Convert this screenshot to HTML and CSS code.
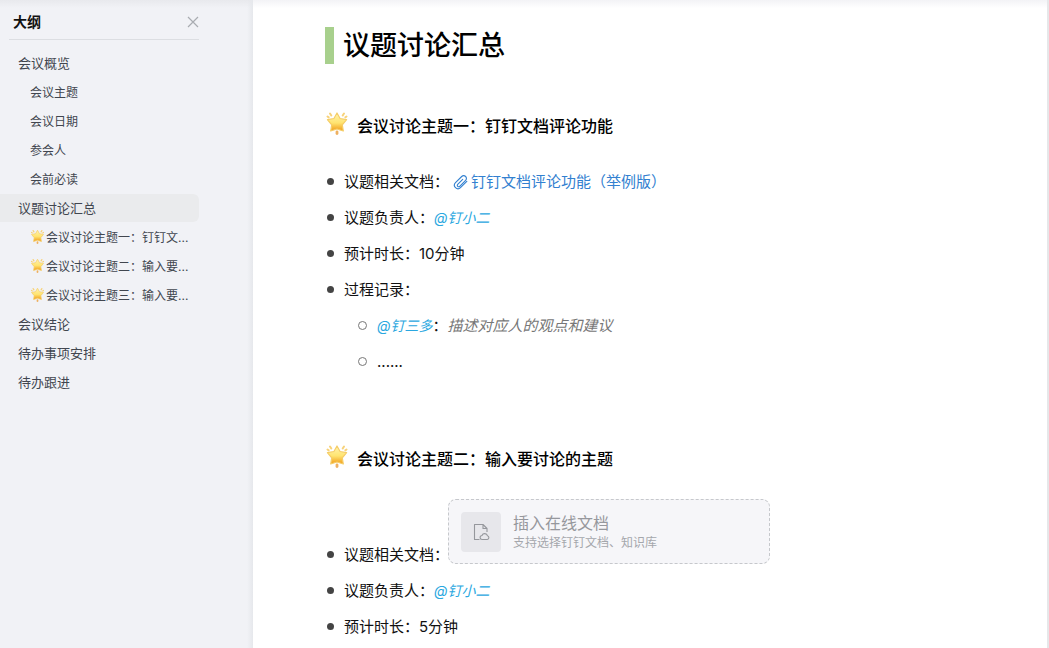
FILE: index.html
```html
<!DOCTYPE html>
<html lang="zh-CN">
<head>
<meta charset="utf-8">
<meta name="viewport" content="width=device-width, initial-scale=1">
<title>议题讨论汇总</title>
<link rel="stylesheet" href="styles.css">
</head>
<body>
<svg class="sprite" aria-hidden="true">
  <defs>
    <linearGradient id="star-fill" x1="0" y1="0" x2="0" y2="1">
      <stop offset="0" stop-color="#fff3b0"/>
      <stop offset="0.55" stop-color="#ffe470"/>
      <stop offset="1" stop-color="#f09a18"/>
    </linearGradient>
    <symbol id="star" viewBox="0 0 24 24">
      <g stroke="#f7d27a" stroke-width="2" stroke-linecap="round" fill="none">
        <path d="M5 2.500l1.300 2M19 2.500l-1.300 2M2.500 5.500l1.200.8M21.500 5.500l-1.200.8"/>
        <path d="M12 20.800v1.700" stroke="#eeb060" stroke-width="2.800"/>
      </g>
      <path d="M12 2l3.100 5.500 6.500 1.200-4.300 5.100 1 6.200-6.300-2-6.300 2 1-6.200-4.300-5.100 6.500-1.200z" fill="url(#star-fill)" stroke="#f5cd68" stroke-width="1.200" stroke-linejoin="round"/>
    </symbol>
  </defs>
</svg>
<div class="app">
  <aside class="sidebar">
    <div class="outline">
      <header class="outline-head">
        <h2 class="outline-title">大纲</h2>
        <button class="close" type="button" aria-label="关闭">
          <svg width="12" height="12" viewBox="0 0 12 12" fill="none" stroke="currentColor" stroke-width="1.200"><path d="M1 1l10 10M11 1L1 11"/></svg>
        </button>
      </header>
      <nav class="outline-nav" aria-label="大纲">
        <a class="item" href="#overview">会议概览</a>
        <a class="item sub" href="#subject">会议主题</a>
        <a class="item sub" href="#date">会议日期</a>
        <a class="item sub" href="#people">参会人</a>
        <a class="item sub" href="#read">会前必读</a>
        <a class="item active" href="#summary">议题讨论汇总</a>
        <a class="item sub" href="#topic1"><svg class="star-small"><use href="#star"/></svg>会议讨论主题一：钉钉文...</a>
        <a class="item sub" href="#topic2"><svg class="star-small"><use href="#star"/></svg>会议讨论主题二：输入要...</a>
        <a class="item sub" href="#topic3"><svg class="star-small"><use href="#star"/></svg>会议讨论主题三：输入要...</a>
        <a class="item" href="#conclusion">会议结论</a>
        <a class="item" href="#todo">待办事项安排</a>
        <a class="item" href="#follow">待办跟进</a>
      </nav>
    </div>
  </aside>
  <main class="doc">
    <h1 class="doc-title" id="summary">议题讨论汇总</h1>
    <section class="topic" id="topic1">
      <h2 class="topic-title"><svg class="star"><use href="#star"/></svg>会议讨论主题一：钉钉文档评论功能</h2>
      <ul class="list">
        <li class="row"><span>议题相关文档：</span><a class="doc-link" href="#doc"><svg class="clip" viewBox="0 0 16 16" fill="none" stroke="currentColor" stroke-width="1.100" stroke-linecap="round"><path d="M13.800 6.900l-6.300 6.300a3.500 3.500 0 0 1-5-5l6.200-6.200a2.700 2.700 0 0 1 3.900 0 2.700 2.700 0 0 1 0 3.900l-5.900 5.900a1.400 1.400 0 0 1-2 0 1.400 1.400 0 0 1 0-2l5-5" transform="translate(0 .5)"/></svg>钉钉文档评论功能（举例版）</a></li>
        <li class="row"><span>议题负责人：</span><a class="mention" href="#user">@钉小二</a></li>
        <li class="row">预计时长：10分钟</li>
        <li class="row">过程记录：</li>
        <li class="nested">
          <ul class="list inner">
            <li class="row"><a class="mention" href="#user">@钉三多</a><span>：</span><em class="hint">描述对应人的观点和建议</em></li>
            <li class="row">......</li>
          </ul>
        </li>
      </ul>
    </section>
    <section class="topic" id="topic2">
      <h2 class="topic-title"><svg class="star"><use href="#star"/></svg>会议讨论主题二：输入要讨论的主题</h2>
      <ul class="list">
        <li class="row"><span>议题相关文档：</span>
          <button class="insert" type="button">
            <span class="insert-icon"><svg width="18" height="18" viewBox="0 0 18 18" fill="none" stroke="currentColor" stroke-width="1.100" stroke-linejoin="round"><path d="M7.500 16.500H2.500v-15h8.500l4 4V9M11 1.500v4h4"/><path d="M10.200 16.500a2 2 0 0 1-.2-4 2.900 2.900 0 0 1 5.500.3 1.900 1.900 0 0 1-.2 3.700z"/></svg></span>
            <span class="insert-text"><span class="insert-title">插入在线文档</span><span class="insert-desc">支持选择钉钉文档、知识库</span></span>
          </button>
        </li>
        <li class="row"><span>议题负责人：</span><a class="mention" href="#user">@钉小二</a></li>
        <li class="row">预计时长：5分钟</li>
      </ul>
    </section>
  </main>
</div>
</body>
</html>
```

FILE: styles.css
```css
* {
  box-sizing: border-box;
}

body {
  margin: 0;
  font-family: Inter, "Noto Sans CJK SC", sans-serif;
  color: #111;
  background: #fff;
}

h1, h2, ul {
  margin: 0;
  padding: 0;
}

a {
  color: inherit;
  text-decoration: none;
}

button {
  padding: 0;
  border: 0;
  background: none;
  font: inherit;
  cursor: pointer;
}

.sprite {
  position: absolute;
  width: 0;
  height: 0;
}

.app {
  display: flex;
  height: 100vh;
  overflow: hidden;
}

.sidebar {
  flex: 0 0 253px;
  background:
    linear-gradient(to left, #e6e8ec, transparent 6px),
    linear-gradient(#e8e9ed, transparent 8px),
    #f1f2f6;
}

.outline {
  width: 199px;
}

.outline-head {
  display: flex;
  align-items: center;
  justify-content: space-between;
  height: 40px;
  margin-left: 9px;
  padding: 4px 0 0 4px;
  border-bottom: 1px solid #dcdee2;
}

.outline-title {
  font-size: 14px;
  line-height: 20px;
  font-weight: 700;
}

.close {
  display: flex;
  color: #a9acb1;
}

.outline-nav {
  display: flex;
  flex-direction: column;
  gap: 1px;
  padding-top: 9px;
}

.item {
  display: flex;
  align-items: center;
  height: 28px;
  padding: 0 0 2px 18px;
  border-radius: 0 6px 6px 0;
  font-size: 13px;
  white-space: nowrap;
  color: #41464f;
}

.sub {
  gap: 1px;
  padding-left: 30px;
  padding-bottom: 2px;
  font-size: 12px;
}

.active {
  background: #eaebed;
}

.star-small {
  flex: none;
  width: 15px;
  height: 15px;
}

.doc {
  flex: 1;
  overflow: hidden;
  padding: 27px 72px 0;
  border-right: 2px solid #e6e7e9;
  background: linear-gradient(#f3f3f6, #fff 8px);
}

.doc-title {
  padding-left: 9px;
  border-left: 9px solid #a8d08d;
  font-size: 27px;
  line-height: 37px;
  font-weight: 500;
  color: #000;
}

.topic {
  padding-top: 46px;
}

.topic + .topic {
  padding-top: 63px;
}

.topic-title {
  display: flex;
  align-items: center;
  gap: 8px;
  height: 29px;
  font-size: 16px;
  font-weight: 500;
  color: #000;
}

.star {
  width: 24px;
  height: 24px;
  margin-bottom: 3px;
}

.list {
  padding-top: 25px;
  list-style: none;
}

.row {
  display: flex;
  align-items: flex-end;
  font-size: 15px;
  line-height: 36px;
}

.row::before {
  content: "";
  flex: none;
  width: 7px;
  height: 7px;
  margin: 0 10px 15px 2px;
  border-radius: 50%;
  background: #444;
}

.inner {
  padding: 0 0 0 31px;
}

.inner .row::before {
  margin-bottom: 14px;
  border: 1px solid #777;
  background: none;
}

.mention {
  font-size: 14px;
  font-style: italic;
  color: #2aa7e0;
}

.hint {
  color: #777;
}

.doc-link {
  display: flex;
  align-items: center;
  gap: 2px;
  margin-left: 4px;
  color: #3280d0;
}

.clip {
  width: 16px;
  height: 16px;
}

.insert {
  display: flex;
  align-items: center;
  gap: 12px;
  width: 322px;
  height: 65px;
  margin: 2px 0 9px -1px;
  padding: 0 12px;
  border: 1px dashed #c6c8cc;
  border-radius: 8px;
  background: #f6f6f9;
  text-align: left;
}

.insert-icon {
  display: flex;
  align-items: center;
  justify-content: center;
  width: 40px;
  height: 40px;
  border-radius: 4px;
  background: #e7e7eb;
  color: #95979c;
}

.insert-text {
  display: flex;
  flex-direction: column;
  padding-top: 2px;
}

.insert-title {
  font-size: 16px;
  line-height: 20px;
  color: #96989d;
}

.insert-desc {
  font-size: 12px;
  line-height: 20px;
  color: #a5a7ac;
}
```
